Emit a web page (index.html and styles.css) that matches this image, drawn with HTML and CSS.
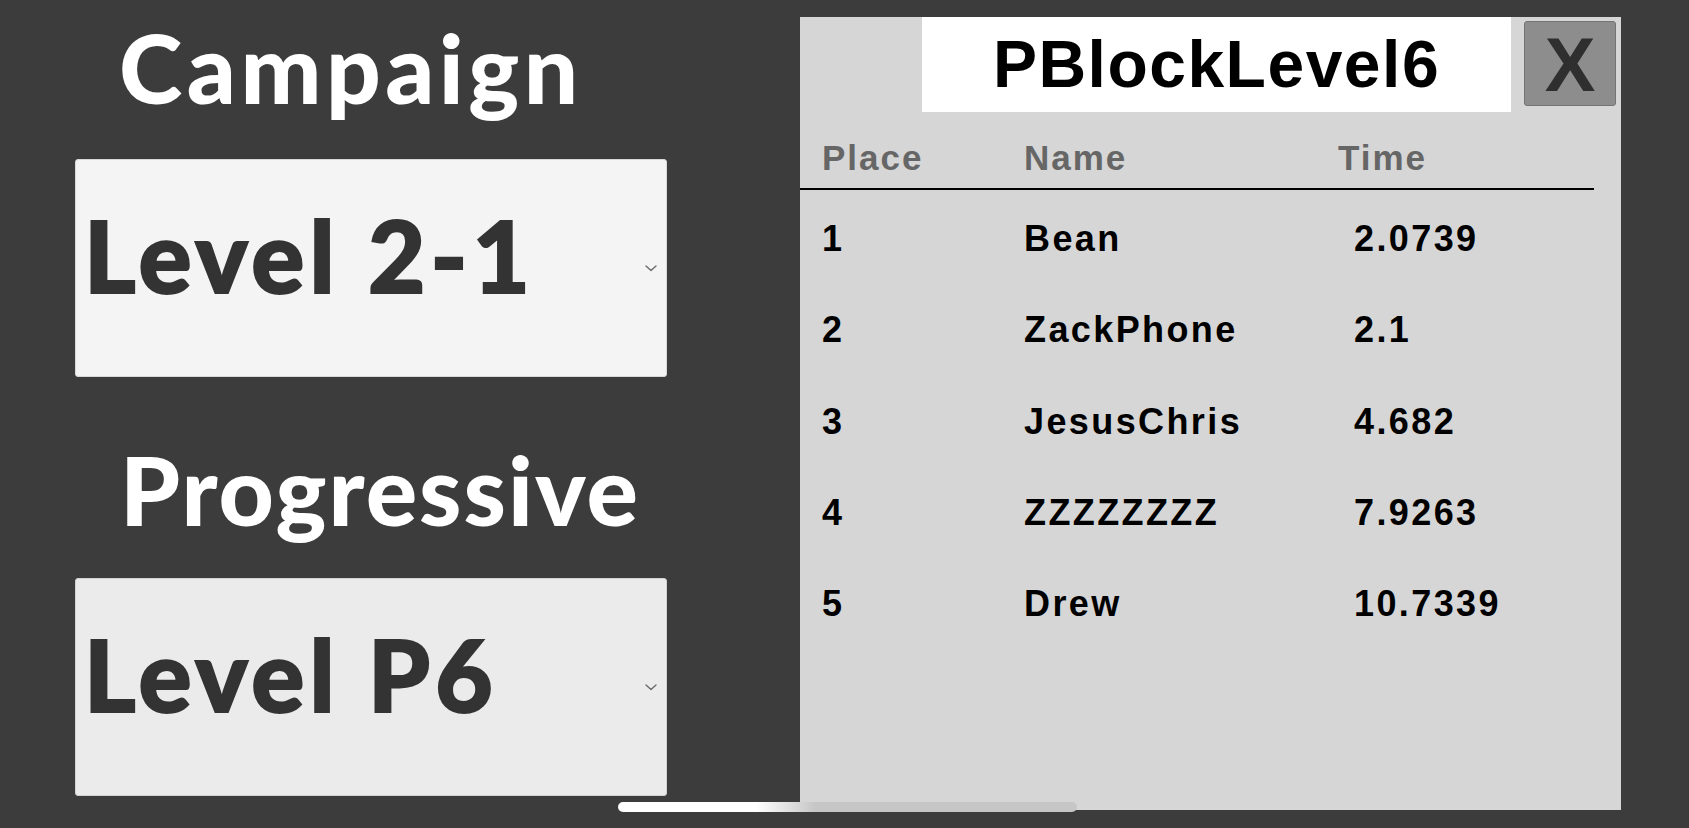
FILE: index.html
```html
<!DOCTYPE html>
<html lang="en">
<head>
<meta charset="utf-8">
<title>Levels</title>
<link rel="stylesheet" href="styles.css">
</head>
<body>
<div class="screen">
  <section class="modes">
    <h2 class="mode-title mode-title-first">Campaign</h2>
    <div class="select select-light">
      <span class="select-value">Level 2-1</span>
      <svg class="chev" width="12" height="7" viewBox="0 0 12 7"><polyline points="1,1 6,5.5 11,1" fill="none" stroke="#6a6a6a" stroke-width="1.4" stroke-linecap="round" stroke-linejoin="round"/></svg>
    </div>
    <h2 class="mode-title mode-title-second">Progressive</h2>
    <div class="select select-mid">
      <span class="select-value">Level P6</span>
      <svg class="chev" width="12" height="7" viewBox="0 0 12 7"><polyline points="1,1 6,5.5 11,1" fill="none" stroke="#6a6a6a" stroke-width="1.4" stroke-linecap="round" stroke-linejoin="round"/></svg>
    </div>
  </section>

  <section class="board">
    <div class="board-top">
      <div class="board-title">PBlockLevel6</div>
      <div class="close">X</div>
    </div>
    <div class="board-head">
      <span>Place</span><span>Name</span><span>Time</span>
    </div>
    <div class="board-rule"></div>
    <div class="board-rows">
      <div class="row"><span>1</span><span>Bean</span><span class="t">2.0739</span></div>
      <div class="row"><span>2</span><span>ZackPhone</span><span class="t">2.1</span></div>
      <div class="row"><span>3</span><span>JesusChris</span><span class="t">4.682</span></div>
      <div class="row"><span>4</span><span>ZZZZZZZZ</span><span class="t">7.9263</span></div>
      <div class="row"><span>5</span><span>Drew</span><span class="t">10.7339</span></div>
    </div>
  </section>
</div>
<div class="home-indicator"></div>
</body>
</html>
```

FILE: styles.css
```css
html, body {
  margin: 0;
  padding: 0;
}
body {
  background: #3c3c3c;
  width: 1689px;
  height: 828px;
  overflow: hidden;
  position: relative;
}
.screen {
  display: flex;
  align-items: flex-start;
  height: 828px;
}
.modes {
  margin-left: 75px;
  width: 592px;
  padding-top: 19px;
  display: flex;
  flex-direction: column;
}
.mode-title {
  margin: 0;
  font-family: "Lato Black", "Lato", "Noto Sans", sans-serif;
  font-weight: 900;
  font-size: 96px;
  line-height: 96px;
  color: #ffffff;
  padding-left: 44px;
  white-space: nowrap;
}
.mode-title-first {
  letter-spacing: 4.5px;
}
.mode-title-second {
  margin-top: 64px;
  padding-left: 45px;
  letter-spacing: 2px;
}
.select {
  box-sizing: border-box;
  height: 218px;
  border-radius: 3px;
  border: 1px solid #d9d9d9;
  display: flex;
  justify-content: space-between;
  margin-top: 44px;
}
.select-mid {
  margin-top: 41px;
}
.select-light { background: #f4f4f4; }
.select-mid { background: #ebebeb; border-color: #d2d2d2; }
.select-value {
  align-self: flex-start;
  padding-top: 45px;
  padding-left: 8px;
  font-family: "Lato Black", "Lato", "Noto Sans", sans-serif;
  font-weight: 900;
  font-size: 99px;
  line-height: 99px;
  color: #333333;
  letter-spacing: 5px;
  -webkit-text-stroke: 2px #333333;
  white-space: nowrap;
}
.chev {
  align-self: center;
  margin-right: 9px;
}
.board {
  margin-left: 133px;
  margin-top: 17px;
  width: 821px;
  height: 793px;
  background: #d6d6d6;
  font-family: "Liberation Sans", Arial, sans-serif;
}
.board-top {
  display: flex;
  align-items: flex-start;
  height: 95px;
}
.board-title {
  margin-left: 122px;
  width: 589px;
  height: 95px;
  background: #ffffff;
  text-align: center;
  font-weight: 700;
  font-size: 66px;
  line-height: 95px;
  letter-spacing: 1.5px;
  color: #000000;
}
.close {
  box-sizing: border-box;
  margin-left: 13px;
  margin-top: 4px;
  width: 92px;
  height: 85px;
  background: #8d8d8d;
  border: 1px solid #747474;
  border-radius: 3px;
  text-align: center;
  font-weight: 700;
  font-size: 76px;
  line-height: 85px;
  color: #2f2f2f;
}
.board-head, .row {
  display: grid;
  grid-template-columns: 202px 314px auto;
  padding-left: 22px;
  font-weight: 700;
}
.board-head {
  margin-top: 26px;
  font-size: 35px;
  letter-spacing: 2px;
  line-height: 40px;
  color: #666666;
}
.board-rule {
  margin-top: 10px;
  width: 794px;
  height: 2px;
  background: #000000;
}
.board-rows {
  margin-top: 3px;
}
.row {
  font-size: 36px;
  letter-spacing: 2.4px;
  line-height: 91.25px;
  color: #000000;
}
.row .t {
  padding-left: 16px;
}
.home-indicator {
  position: absolute;
  left: 618px;
  top: 802px;
  width: 459px;
  height: 10px;
  border-radius: 5px;
  background: linear-gradient(to right, #ffffff 0%, #ffffff 30%, #c6c6c6 43%, #c6c6c6 100%);
}
```
